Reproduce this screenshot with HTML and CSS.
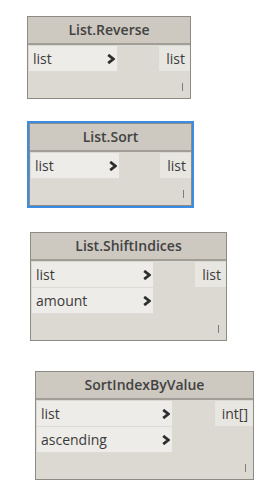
FILE: index.html
```html
<!DOCTYPE html>
<html lang="en">
<head>
  <meta charset="UTF-8">
  <meta name="viewport" content="width=device-width, initial-scale=1.0">
  <title>Dynamo Nodes</title>
  <link rel="stylesheet" href="styles.css">
</head>
<body>
<div class="canvas">

  <div class="node node-reverse">
    <div class="node-head">List.Reverse</div>
    <div class="node-body">
      <div class="inputs">
        <div class="port">
          <span>list</span>
          <svg class="chev" viewBox="0 0 8 10"><polyline points="1.2,0.9 6.4,5 1.2,9.1"/></svg>
        </div>
      </div>
      <div class="outputs">
        <div class="out">list</div>
      </div>
    </div>
    <div class="node-foot"><span class="grip"></span></div>
  </div>

  <div class="node node-sort selected">
    <div class="node-head">List.Sort</div>
    <div class="node-body">
      <div class="inputs">
        <div class="port">
          <span>list</span>
          <svg class="chev" viewBox="0 0 8 10"><polyline points="1.2,0.9 6.4,5 1.2,9.1"/></svg>
        </div>
      </div>
      <div class="outputs">
        <div class="out">list</div>
      </div>
    </div>
    <div class="node-foot"><span class="grip"></span></div>
  </div>

  <div class="node node-shift">
    <div class="node-head">List.ShiftIndices</div>
    <div class="node-body">
      <div class="inputs">
        <div class="port">
          <span>list</span>
          <svg class="chev" viewBox="0 0 8 10"><polyline points="1.2,0.9 6.4,5 1.2,9.1"/></svg>
        </div>
        <div class="port">
          <span>amount</span>
          <svg class="chev" viewBox="0 0 8 10"><polyline points="1.2,0.9 6.4,5 1.2,9.1"/></svg>
        </div>
      </div>
      <div class="outputs">
        <div class="out">list</div>
      </div>
    </div>
    <div class="node-foot"><span class="grip"></span></div>
  </div>

  <div class="node node-sortindex">
    <div class="node-head">SortIndexByValue</div>
    <div class="node-body">
      <div class="inputs">
        <div class="port">
          <span>list</span>
          <svg class="chev" viewBox="0 0 8 10"><polyline points="1.2,0.9 6.4,5 1.2,9.1"/></svg>
        </div>
        <div class="port">
          <span>ascending</span>
          <svg class="chev" viewBox="0 0 8 10"><polyline points="1.2,0.9 6.4,5 1.2,9.1"/></svg>
        </div>
      </div>
      <div class="outputs">
        <div class="out">int[]</div>
      </div>
    </div>
    <div class="node-foot"><span class="grip"></span></div>
  </div>

</div>
</body>
</html>
```

FILE: styles.css
```css
body {
  margin: 0;
  background: #fff;
  font-family: 'Open Sans', sans-serif;
  color: #3b3b3b;
}
.canvas {
  display: flex;
  flex-direction: column;
  align-items: flex-start;
  padding-top: 16px;
}
.node {
  box-sizing: border-box;
  border: 1px solid #8e8b87;
  background: #dcd9d3;
}
.node-reverse {
  width: 164px;
  margin-left: 27px;
}
.node-sort {
  width: 163px;
  margin-left: 29px;
  margin-top: 24px;
}
.node-shift {
  width: 197px;
  margin-left: 30px;
  margin-top: 26px;
}
.node-sortindex {
  width: 219px;
  margin-left: 35px;
  margin-top: 30px;
}
.selected {
  outline: 2px solid #3a8de2;
}
.node-head {
  height: 26px;
  line-height: 26px;
  text-align: center;
  font-size: 14px;
  font-weight: 600;
  color: #424242;
  background: #cdc8c0;
  border-bottom: 2px solid #a19d97;
}
.node-body {
  display: flex;
  justify-content: space-between;
  padding: 1px 0 0 1px;
}
.port {
  display: flex;
  align-items: center;
  justify-content: space-between;
  height: 25px;
  padding: 0 2px 0 4px;
  background: #edece8;
  font-size: 14px;
  border-bottom: 1px solid #dedbd6;
}
.node-reverse .inputs,
.node-sort .inputs {
  width: 88px;
}
.node-shift .inputs {
  width: 121px;
}
.node-sortindex .inputs {
  width: 135px;
}
.chev {
  width: 8px;
  height: 10px;
  fill: none;
  stroke: #2e2e2e;
  stroke-width: 2.8;
}
.out {
  box-sizing: border-box;
  height: 25px;
  line-height: 25px;
  padding: 0 5px;
  text-align: right;
  background: #e8e6e1;
  font-size: 14px;
}
.node-reverse .out,
.node-sort .out,
.node-shift .out {
  width: 31px;
}
.node-sortindex .out {
  width: 38px;
}
.node-foot {
  display: flex;
  justify-content: flex-end;
  align-items: flex-end;
  height: 26px;
  box-sizing: border-box;
  padding: 0 7px 7px 0;
}
.grip {
  width: 1px;
  height: 8px;
  background: #7f7d7a;
}
```
